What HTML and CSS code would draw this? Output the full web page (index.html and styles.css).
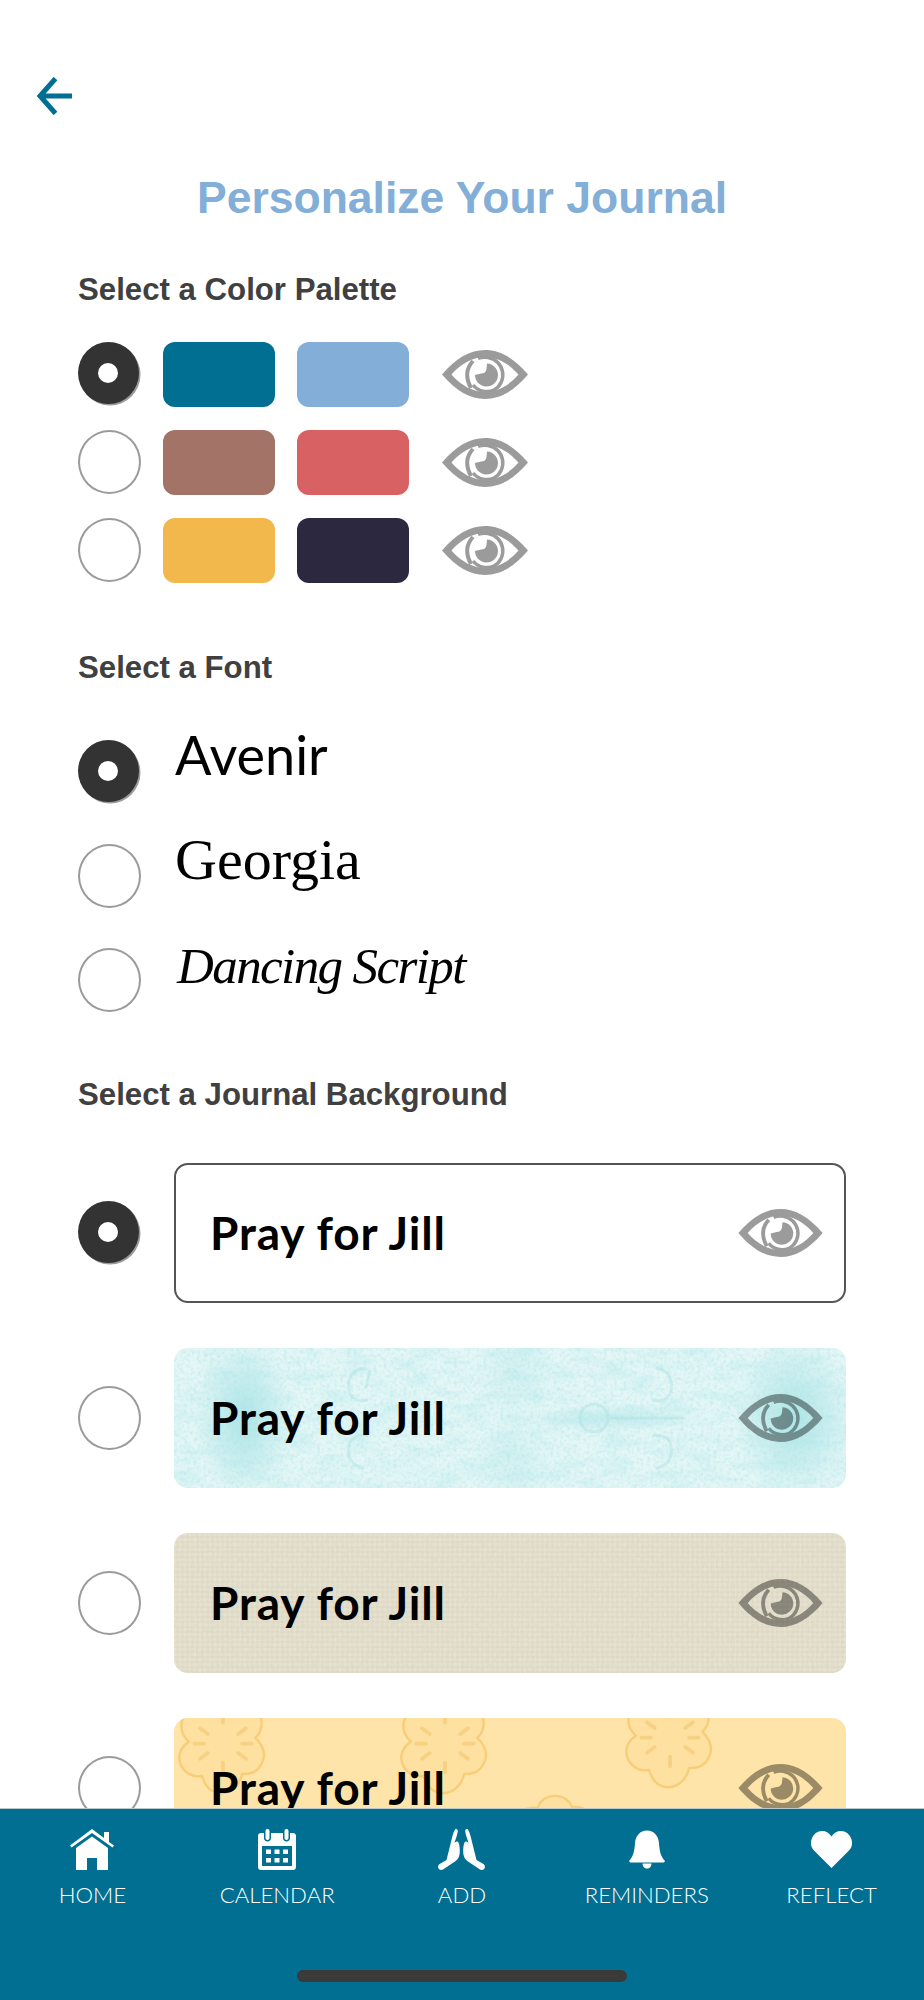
FILE: index.html
```html
<!DOCTYPE html>
<html>
<head>
    <title>Personalize Your Journal</title>
    <link rel="stylesheet" href="styles.css">
</head>
<body>

<svg class="defs" width="0" height="0">
    <defs>
        <symbol id="eye" viewBox="0 0 86 49">
            <path fill-rule="evenodd" d="M0 24.5C14 8 28 0 43 0C58 0 72 8 86 24.5C72 41 58 49 43 49C28 49 14 41 0 24.5ZM9.500 24.5C19 35.500 31 42 43 42C55 42 67 35.500 76.500 24.5C67 13.500 55 7 43 7C31 7 19 13.500 9.500 24.500Z"/>
            <path d="M45 13.500A11.500 11.500 0 1 1 33 25L39 23.500A5.500 5.500 0 0 0 44.500 19Z"/>
            <path fill="none" stroke="#000" stroke-width="3.500" d="M36 8.500A17 17 0 0 1 46 7.500A17.500 17.500 0 0 1 52 40A17.500 17.500 0 0 1 31 35"/>
            <path fill="none" stroke="#000" stroke-width="4" d="M31 11C24.500 18 23 27 29 38"/>
        </symbol>
        <filter id="noise">
            <feTurbulence type="fractalNoise" baseFrequency="0.3" numOctaves="3" seed="4"/>
            <feColorMatrix values="0 0 0 0 0.40  0 0 0 0 0.78  0 0 0 0 0.80  0 0 0 1.4 -0.62"/>
        </filter>
        <filter id="blotch">
            <feTurbulence type="fractalNoise" baseFrequency="0.035 0.09" numOctaves="4" seed="11"/>
            <feColorMatrix values="0 0 0 0 0.45  0 0 0 0 0.82  0 0 0 0 0.84  0 0 0 2.4 -1.05"/>
        </filter>
        <filter id="weave">
            <feTurbulence type="fractalNoise" baseFrequency="0.5 0.2" numOctaves="2" seed="9"/>
            <feColorMatrix values="0 0 0 0 0.62  0 0 0 0 0.58  0 0 0 0 0.46  0 0 0 1.3 -0.5"/>
        </filter>
        <symbol id="flower" viewBox="0 0 96 110">
            <path fill="#fee0a0" stroke="#f7cd78" stroke-width="2.500" d="M48 2C58 2 64 8 66 14C76 12 86 18 88 28C90 38 86 44 82 48C90 56 94 66 88 76C82 86 74 86 68 86C66 96 58 106 46 106C34 106 28 96 26 88C16 90 6 84 3 74C0 64 6 56 12 52C4 44 2 34 8 24C14 14 24 14 30 14C32 8 38 2 48 2Z"/>
            <g stroke="#f7d183" stroke-width="4" stroke-linecap="round">
                <path d="M48 22V32M48 74V84M24 38L32 44M64 64L72 70M24 70L32 64M64 44L72 38M18 54H28M68 54H78"/>
            </g>
        </symbol>
    </defs>
</svg>

<div class="screen">
    <div class="content">

        <svg class="back" viewBox="0 0 36 38">
            <path fill="none" stroke="#006f92" stroke-width="5" d="M36 19H4M19.500 1.500L4 19L19.500 36.500"/>
        </svg>

        <h1 class="title">Personalize Your Journal</h1>

        <p class="heading first">Select a Color Palette</p>
        <div class="palettes">
            <div class="palette">
                <span class="radio selected"></span>
                <span class="swatch teal"></span>
                <span class="swatch sky"></span>
                <svg class="eye"><use href="#eye"/></svg>
            </div>
            <div class="palette">
                <span class="radio"></span>
                <span class="swatch brown"></span>
                <span class="swatch coral"></span>
                <svg class="eye"><use href="#eye"/></svg>
            </div>
            <div class="palette">
                <span class="radio"></span>
                <span class="swatch yellow"></span>
                <span class="swatch navy"></span>
                <svg class="eye"><use href="#eye"/></svg>
            </div>
        </div>

        <p class="heading second">Select a Font</p>
        <div class="fonts">
            <div class="font-row">
                <span class="radio selected"></span>
                <span class="font-name avenir">Avenir</span>
            </div>
            <div class="font-row">
                <span class="radio"></span>
                <span class="font-name georgia">Georgia</span>
            </div>
            <div class="font-row">
                <span class="radio"></span>
                <span class="font-name dancing">Dancing Script</span>
            </div>
        </div>

        <p class="heading third">Select a Journal Background</p>
        <div class="backgrounds">
            <div class="bg-row">
                <span class="radio selected"></span>
                <div class="card plain">
                    <span class="pray">Pray for Jill</span>
                    <svg class="eye"><use href="#eye"/></svg>
                </div>
            </div>
            <div class="bg-row">
                <span class="radio"></span>
                <div class="card aqua">
                    <svg class="texture" width="672" height="140">
                        <rect width="672" height="140" filter="url(#blotch)" opacity="0.4"/>
                        <rect width="672" height="140" filter="url(#noise)" opacity="0.8"/>
                        <g fill="none" stroke="#a9e0e2" stroke-width="3" opacity="0.4">
                            <path d="M190 20C176 22 172 34 176 46C180 52 186 54 194 52M196 22L192 40"/>
                            <path d="M190 120C176 118 172 106 176 94C180 88 186 86 194 88"/>
                            <path d="M482 20C496 22 500 34 496 46C492 52 486 54 478 52"/>
                            <path d="M482 120C496 118 500 106 496 94C492 88 486 86 478 88"/>
                            <circle cx="420" cy="70" r="14"/>
                            <path d="M436 70H510"/>
                        </g>
                    </svg>
                    <span class="pray">Pray for Jill</span>
                    <svg class="eye"><use href="#eye"/></svg>
                </div>
            </div>
            <div class="bg-row">
                <span class="radio"></span>
                <div class="card linen">
                    <svg class="texture" width="672" height="140"><rect width="672" height="140" filter="url(#weave)" opacity="0.35"/></svg>
                    <span class="pray">Pray for Jill</span>
                    <svg class="eye"><use href="#eye"/></svg>
                </div>
            </div>
            <div class="bg-row">
                <span class="radio"></span>
                <div class="card lace">
                    <svg class="texture" width="672" height="140">
                        <use href="#flower" x="3" y="-26" width="92" height="105"/>
                        <use href="#flower" x="225" y="-26" width="92" height="105"/>
                        <use href="#flower" x="450" y="-32" width="92" height="105"/>
                        <use href="#flower" x="335" y="76" width="92" height="105"/>
                    </svg>
                    <span class="pray">Pray for Jill</span>
                    <svg class="eye"><use href="#eye"/></svg>
                </div>
            </div>
        </div>

    </div>

    <nav class="tabbar">
        <div class="tabs">
            <div class="tab">
                <svg class="tab-icon" viewBox="0 0 44 41">
                    <path d="M22 0L34 9V3H39V13L44 16.500L42.500 18.500L22 4L1.500 18.500L0 16.500Z"/>
                    <path d="M22 7.500L38 19V41H27V29H17V41H6V19Z"/>
                </svg>
                <span>HOME</span>
            </div>
            <div class="tab">
                <svg class="tab-icon" viewBox="0 0 38 41">
                    <path fill-rule="evenodd" d="M3 4H6V9C6 11 7.500 12.500 9.500 12.500C11.500 12.500 13 11 13 9V4H25V9C25 11 26.500 12.500 28.500 12.500C30.500 12.500 32 11 32 9V4H35C36.700 4 38 5.300 38 7V38C38 39.700 36.700 41 35 41H3C1.300 41 0 39.700 0 38V7C0 5.300 1.300 4 3 4ZM4 17V37H34V17ZM8 20.500H13V25H8ZM16.500 20.500H21.500V25H16.500ZM25 20.500H30V25H25ZM8 29H13V33.500H8ZM16.500 29H21.500V33.500H16.500ZM25 29H30V33.500H25Z"/>
                    <rect x="7.500" y="0" width="4" height="11" rx="2"/>
                    <rect x="26.500" y="0" width="4" height="11" rx="2"/>
                </svg>
                <span>CALENDAR</span>
            </div>
            <div class="tab">
                <svg class="tab-icon" viewBox="0 0 47 41">
                    <path d="M17 0.500C18.500 -0.500 20 0.500 19.800 2.500C19 7 17.500 10.500 16.500 14C18 12.500 19.800 12 20.500 13.500C21.500 16 21.800 19 21.800 22C21.800 27 20.500 30 17 32.500L5 40.500C3 41.500 1 40.800 0.300 39C-0.300 37 0.500 35.500 2 34.700L8.500 31C10 25 11.500 19 13 13C14 8.500 15 4 17 0.500Z"/>
                    <path d="M30 0.500C28.500 -0.500 27 0.500 27.200 2.500C28 7 29.500 10.500 30.500 14C29 12.500 27.200 12 26.500 13.500C25.500 16 25.200 19 25.200 22C25.200 27 26.500 30 30 32.500L42 40.500C44 41.500 46 40.800 46.700 39C47.300 37 46.500 35.500 45 34.700L38.500 31C37 25 35.500 19 34 13C33 8.500 32 4 30 0.500Z"/>
                </svg>
                <span>ADD</span>
            </div>
            <div class="tab">
                <svg class="tab-icon" viewBox="0 -1.500 36 41">
                    <path d="M18 0C25 0 29.500 5.500 30 12.500C30.500 20 31.500 26 36 30.500L35 32H1L0 30.500C4.500 26 5.500 20 6 12.500C6.500 5.500 11 0 18 0Z"/>
                    <path d="M13.500 33H22.500C22.500 36 20.500 38 18 38C15.500 38 13.500 36 13.500 33Z"/>
                </svg>
                <span>REMINDERS</span>
            </div>
            <div class="tab">
                <svg class="tab-icon" viewBox="0 -2 41 41">
                    <path d="M20.500 37L3.500 20C0 16.500 -1 12.500 0.800 7.500C2.500 3 6.500 0 11 0C15 0 18.500 2 20.500 5.500C22.500 2 26 0 30 0C34.500 0 38.500 3 40.200 7.500C42 12.500 41 16.500 37.500 20Z"/>
                </svg>
                <span>REFLECT</span>
            </div>
        </div>
        <div class="home-bar"></div>
    </nav>
</div>

</body>
</html>
```

FILE: styles.css
```css
body {
    margin: 0;
    background-color: white;
    font-family: "Liberation Sans", Arial, sans-serif;
}

.defs {
    display: block;
    height: 0;
}

.screen {
    display: flex;
    flex-direction: column;
    height: 2000px;
    overflow: hidden;
}

.content {
    flex: 1;
    min-height: 0;
    overflow: hidden;
    padding: 77px 78px 0 78px;
}

.back {
    display: block;
    width: 36px;
    height: 38px;
    margin-left: -42px;
}

.title {
    margin: 57px 0 0 0;
    font-size: 44.5px;
    line-height: 52px;
    font-weight: bold;
    color: #82aed8;
    text-align: center;
}

.heading {
    margin: 0;
    font-size: 31.2px;
    line-height: 36px;
    font-weight: bold;
    color: #404040;
}

.heading.first {
    margin-top: 48px;
}

.heading.second {
    margin-top: 67px;
}

.heading.third {
    margin-top: 65px;
}

.radio {
    flex: none;
    box-sizing: border-box;
    width: 63px;
    height: 64px;
    border: 2px solid #9b9b9b;
    border-radius: 50%;
    background-color: white;
}

.radio.selected {
    position: relative;
    width: 61px;
    height: 62px;
    margin-right: 2px;
    margin-bottom: 2px;
    border: none;
    background-color: #333333;
    box-shadow: 1.5px 1.5px 0 #9b9b9b;
}

/* white dot of the selected radio */
.radio.selected::after {
    content: "";
    position: absolute;
    left: 20px;
    top: 21px;
    width: 20px;
    height: 20px;
    border-radius: 50%;
    background-color: white;
}

.palettes {
    display: flex;
    flex-direction: column;
    row-gap: 23px;
    margin-top: 34px;
}

.palette {
    display: flex;
    align-items: flex-start;
    column-gap: 22px;
}

.palette .eye {
    margin-top: 8px;
    margin-left: 11px;
}

.swatch {
    width: 112px;
    height: 65px;
    border-radius: 12px;
}

.teal { background-color: #006f92; }
.sky { background-color: #82aed8; }
.brown { background-color: #a37368; }
.coral { background-color: #d86163; }
.yellow { background-color: #f2b84c; }
.navy { background-color: #2b2840; }

.eye {
    flex: none;
    width: 86px;
    height: 49px;
    opacity: 0.39;
}

.fonts {
    display: flex;
    flex-direction: column;
    row-gap: 40px;
    margin-top: 54px;
}

.font-row {
    display: flex;
    align-items: flex-start;
    column-gap: 34px;
    height: 64px;
}

.font-name {
    color: black;
    white-space: nowrap;
}

.avenir {
    margin-top: -20px;
    font-family: Lato, sans-serif;
    font-size: 54px;
    font-weight: 400;
    line-height: 70px;
}

.georgia {
    margin-top: -19px;
    font-family: "Liberation Serif", serif;
    font-size: 58px;
    line-height: 70px;
}

.dancing {
    margin-top: -17px;
    margin-left: 2px;
    font-family: "Liberation Serif", serif;
    font-style: italic;
    font-size: 51px;
    letter-spacing: -1.6px;
    line-height: 70px;
}

.backgrounds {
    display: flex;
    flex-direction: column;
    row-gap: 45px;
    margin-top: 50px;
}

.bg-row {
    display: flex;
    align-items: center;
    column-gap: 33px;
}

.card {
    position: relative;
    flex: none;
    display: flex;
    align-items: center;
    justify-content: space-between;
    box-sizing: border-box;
    width: 672px;
    height: 140px;
    padding: 0 23px 0 36px;
    border-radius: 14px;
    overflow: hidden;
}

.plain {
    border: 2px solid #555555;
    padding: 0 21px 0 34px;
}

.aqua {
    background:
        radial-gradient(ellipse 50px 80px at 70px 50%, rgba(120, 212, 216, 0.5), transparent),
        radial-gradient(ellipse 60px 80px at 620px 50%, rgba(120, 212, 216, 0.5), transparent),
        radial-gradient(ellipse 90px 14px at 440px 50%, rgba(120, 212, 216, 0.3), transparent),
        radial-gradient(ellipse 40px 60px at 340px 15%, rgba(120, 212, 216, 0.15), transparent),
        radial-gradient(ellipse 40px 60px at 340px 85%, rgba(120, 212, 216, 0.15), transparent),
        #e4f6f6;
}

.linen {
    background:
        repeating-linear-gradient(90deg, rgba(255, 255, 255, 0.1) 0 2px, transparent 2px 5px),
        repeating-linear-gradient(0deg, rgba(120, 110, 80, 0.04) 0 2px, transparent 2px 5px),
        #e4dfcc;
}

.lace {
    background-color: #fee4a8;
}

.texture {
    position: absolute;
    left: 0;
    top: 0;
}

.pray {
    position: relative;
    font-family: Lato, sans-serif;
    font-size: 46px;
    font-weight: 700;
    letter-spacing: 0.9px;
    line-height: 56px;
    color: black;
    white-space: nowrap;
}

.card .eye {
    position: relative;
    width: 85px;
    height: 48px;
}

.tabbar {
    flex: none;
    box-sizing: border-box;
    height: 192px;
    padding-top: 20px;
    border-top: 1px solid #b8c8cf;
    background-color: #006f92;
}

.tabs {
    display: grid;
    grid-template-columns: repeat(5, 1fr);
}

.tab {
    display: flex;
    flex-direction: column;
    align-items: center;
    color: white;
    font-family: Lato, sans-serif;
    font-size: 22.2px;
    font-weight: 300;
    line-height: 28px;
}

.tab-icon {
    flex: none;
    height: 41px;
    margin-bottom: 11px;
    fill: white;
}

.home-bar {
    width: 330px;
    height: 12px;
    margin: 61px auto 0 auto;
    border-radius: 6px;
    background-color: #3a3a3a;
}
```
